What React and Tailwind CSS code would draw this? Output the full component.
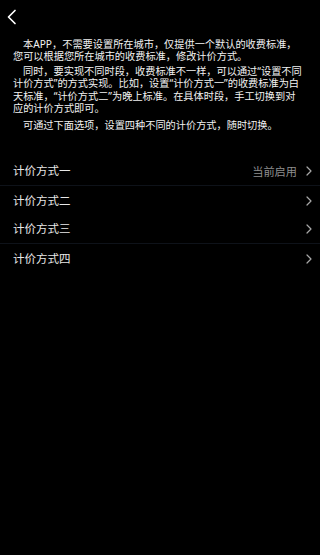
export default function App() {
  const Chevron = () => (
    <svg width="6" height="10" viewBox="0 0 6 10" className="shrink-0">
      <path d="M1 1 L5 5 L1 9" fill="none" stroke="#a8a8a8" strokeWidth="1.2" strokeLinecap="round" strokeLinejoin="round" />
    </svg>
  );
  const rows = [
    { name: "计价方式一", note: "当前启用", border: true },
    { name: "计价方式二", border: false },
    { name: "计价方式三", border: true },
    { name: "计价方式四", border: false },
  ];
  return (
    <div className="w-[320px] h-[555px] bg-black text-white overflow-hidden font-['Noto_Sans_CJK_SC','Noto_Sans',sans-serif]">
      <div className="h-[34px] flex items-center pl-[6px]">
        <svg width="12" height="18" viewBox="0 0 12 18">
          <path d="M9 2.5 L2.5 9 L9 15.5" fill="none" stroke="#ffffff" strokeWidth="1.7" strokeLinecap="round" strokeLinejoin="round" />
        </svg>
      </div>
      <div className="pl-[13px] pr-[15px] pt-[4px] text-[10.2px] leading-[12.3px] text-[#f2f2f2] font-['Noto_Sans','Noto_Sans_CJK_SC',sans-serif]">
        <p className="indent-[10px]">本APP，不需要设置所在城市，仅提供一个默认的收费标准，您可以根据您所在城市的收费标准，修改计价方式。</p>
        <p className="indent-[10px] mt-[2.5px]">同时，要实现不同时段，收费标准不一样，可以通过“设置不同计价方式”的方式实现。比如，设置“计价方式一”的收费标准为白天标准，“计价方式二”为晚上标准。在具体时段，手工切换到对应的计价方式即可。</p>
        <p className="indent-[10px] mt-[4.5px]">可通过下面选项，设置四种不同的计价方式，随时切换。</p>
      </div>
      <div className="mt-[26px]">
        {rows.map((r) => (
          <div
            key={r.name}
            className={`h-[29px] flex items-center pl-[13px] pr-[8px] ${r.border ? "border-b border-[#0e1219]" : ""}`}
          >
            <span className="flex-1 text-[11.5px] text-[#e8e8e8]">{r.name}</span>
            {r.note && <span className="text-[11.2px] text-[#8f8f8f] mr-[9px]">{r.note}</span>}
            <Chevron />
          </div>
        ))}
      </div>
    </div>
  );
}
